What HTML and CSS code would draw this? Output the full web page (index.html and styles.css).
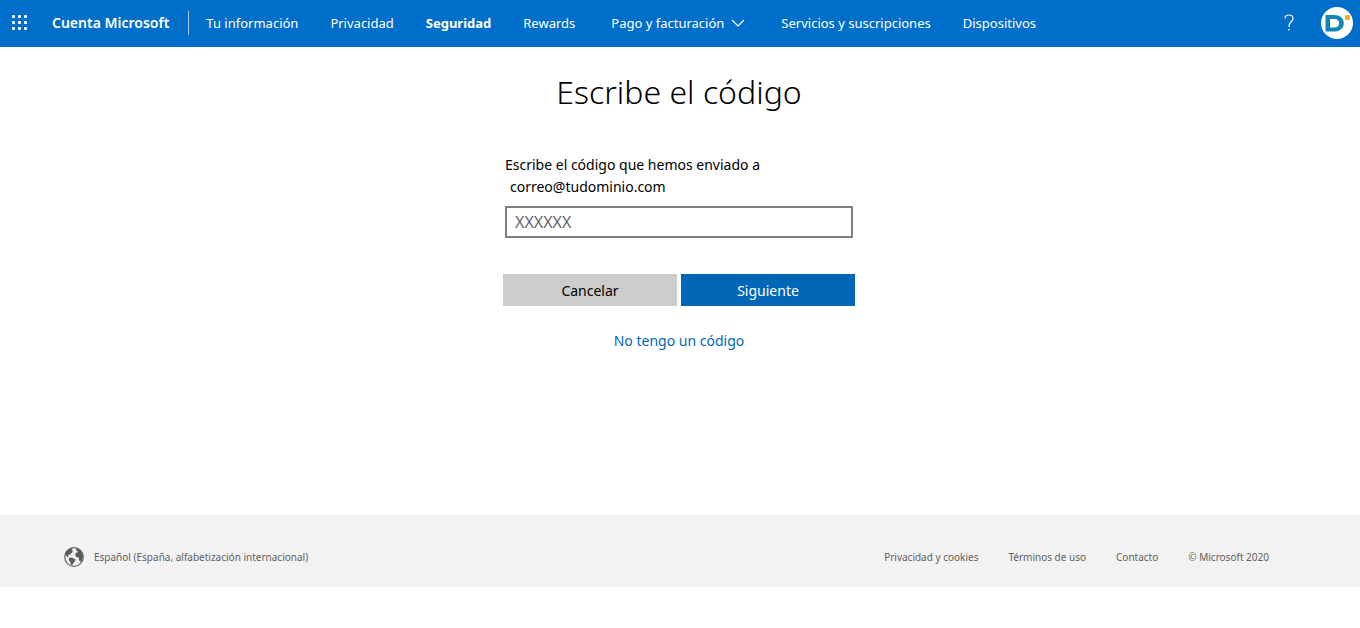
FILE: index.html
```html
<!DOCTYPE html>
<html lang="es">
<head>
<meta charset="utf-8">
<meta name="viewport" content="width=device-width, initial-scale=1">
<title>Cuenta Microsoft</title>
<link rel="stylesheet" href="styles.css">
</head>
<body>
<header class="topbar">
  <button class="launcher" type="button" aria-label="Aplicaciones">
    <svg width="16" height="16" viewBox="0 0 16 16" fill="currentColor" aria-hidden="true">
      <rect x="0" y="0" width="3" height="3" rx="1"/><rect x="6" y="0" width="3" height="3" rx="1"/><rect x="12" y="0" width="3" height="3" rx="1"/>
      <rect x="0" y="6" width="3" height="3" rx="1"/><rect x="6" y="6" width="3" height="3" rx="1"/><rect x="12" y="6" width="3" height="3" rx="1"/>
      <rect x="0" y="12" width="3" height="3" rx="1"/><rect x="6" y="12" width="3" height="3" rx="1"/><rect x="12" y="12" width="3" height="3" rx="1"/>
    </svg>
  </button>
  <a class="brand" href="#">Cuenta Microsoft</a>
  <nav class="nav">
    <a class="nav-link" href="#">Tu información</a>
    <a class="nav-link" href="#">Privacidad</a>
    <a class="nav-link nav-current" href="#" aria-current="page">Seguridad</a>
    <a class="nav-link" href="#">Rewards</a>
    <button class="nav-link nav-menu" type="button">Pago y facturación
      <svg width="14" height="8" viewBox="0 0 14 8" fill="none" stroke="currentColor" stroke-width="1.2" aria-hidden="true"><path d="M1 1l6 6 6-6"/></svg>
    </button>
    <a class="nav-link" href="#">Servicios y suscripciones</a>
    <a class="nav-link" href="#">Dispositivos</a>
  </nav>
  <div class="tools">
    <button class="help" type="button" aria-label="Ayuda">
      <svg width="12" height="18" viewBox="0 0 12 18" fill="none" stroke="currentColor" stroke-width="1.2" aria-hidden="true"><path d="M2 4.500C2 2.300 3.700 1 6 1s4 1.300 4 3.500c0 3.300-4 3.800-4 7.500v1"/><path d="M6 15v1.500" stroke-width="1.500"/></svg>
    </button>
    <button class="avatar" type="button" aria-label="Perfil">
      <svg width="32" height="32" viewBox="0 0 32 32" aria-hidden="true">
        <circle cx="16" cy="16" r="16" fill="#fff"/>
        <path fill="#1285b8" fill-rule="evenodd" d="M4.500 8h8.500c6 0 9.800 3.200 9.800 8.200s-3.800 8.300-9.800 8.300H4.500zM9 12v8.500h4c3.200 0 5.200-1.500 5.200-4.300S16.200 12 13 12z"/>
        <rect x="24" y="8" width="5" height="5" fill="#fbb017"/>
      </svg>
    </button>
  </div>
</header>
<main class="main">
  <h1 class="title">Escribe el código</h1>
  <form class="form">
    <label class="label" for="code">Escribe el código que hemos enviado a <span class="email">correo@tudominio.com</span></label>
    <input class="code" id="code" type="text" placeholder="XXXXXX">
    <div class="actions">
      <button class="btn" type="button">Cancelar</button>
      <button class="btn btn-primary" type="submit">Siguiente</button>
    </div>
    <a class="no-code" href="#">No tengo un código</a>
  </form>
</main>
<footer class="footer">
  <a class="locale" href="#">
    <svg width="20" height="20" viewBox="0 0 20 20" aria-hidden="true">
      <circle cx="10" cy="10" r="9.300" fill="#f2f2f2" stroke="#666" stroke-width="1.200"/>
      <path fill="#5c5c5c" d="M1 8c.5-3 2.500-5.500 5.500-6.700L8.500 2 8 3.500l1 .8L7.500 6 6 7.500l-2 .5L5 10 3 9.500 1.500 8zM5 11l3-.5 3.500 2-1 2.500-1.500 1.500-.8 2-1.500-1-.3-2.500-1.700-2zM12 2l2-.3c3 1.800 5 4.800 5.100 8.300L18 13l-1.500 2-1.500-2-.3-2.500-2.500-.5L11 7.500l1.500-2 2-.5-1.800-1z"/>
    </svg>
    Español (España, alfabetización internacional)
  </a>
  <div class="legal">
    <a class="legal-link" href="#">Privacidad y cookies</a>
    <a class="legal-link" href="#">Términos de uso</a>
    <a class="legal-link" href="#">Contacto</a>
    <span>© Microsoft 2020</span>
  </div>
</footer>
</body>
</html>
```
FILE: styles.css
```css
* { box-sizing: border-box; }
body {
  margin: 0;
  background: #fff;
  color: #000;
  font: 14px/22px "Segoe UI", "Noto Sans", sans-serif;
}
a { color: inherit; text-decoration: none; }
button { border: 0; padding: 0; background: none; color: inherit; font: inherit; cursor: pointer; }
svg { display: block; flex: none; }

.topbar {
  display: flex;
  align-items: center;
  min-height: 47px;
  padding: 0 7px 1px 12px;
  background: #006fcb;
  color: #fff;
  font-size: 13px;
  line-height: 24px;
  white-space: nowrap;
}
.brand {
  margin-left: 24px;
  padding-right: 19px;
  border-right: 1px solid #a6cdee;
  font-size: 14px;
  font-weight: 600;
}
.nav { display: flex; gap: 32px; margin-left: 17px; }
.nav-link { line-height: 24px; }
.nav-current { font-weight: 700; }
.nav-menu { display: flex; align-items: center; gap: 7px; padding: 0 4px; }
.tools { display: flex; align-items: center; gap: 26px; margin-left: auto; }

.main { min-height: 468px; padding: 21px 18px 22px 16px; }
.title { margin: 0; font-size: 32px; line-height: 48px; font-weight: 300; text-align: center; }
.form { display: flex; flex-direction: column; max-width: 352px; margin: 38px auto 0; }
.label { padding: 0 2px; }
.email { display: block; padding-left: 5px; }
.code {
  height: 32px;
  margin: 8px 2px 0;
  padding: 0 8px;
  border: 2px solid #808080;
  font: inherit;
  font-size: 16px;
}
.code::placeholder { color: #666; opacity: 1; }
.actions { display: grid; grid-template-columns: 1fr 1fr; gap: 4px; margin-top: 36px; }
.btn { height: 32px; padding-top: 2px; background: #ccc; }
.btn-primary { background: #0067b8; color: #fff; }
.no-code { align-self: center; margin-top: 24px; color: #0067b8; }

.footer {
  display: flex;
  align-items: center;
  justify-content: space-between;
  min-height: 72px;
  padding: 11px 91px 0 64px;
  background: #f2f2f2;
  color: #616161;
  font-size: 10px;
}
.locale { display: flex; align-items: center; gap: 10px; }
.legal { display: flex; gap: 30px; }
```
